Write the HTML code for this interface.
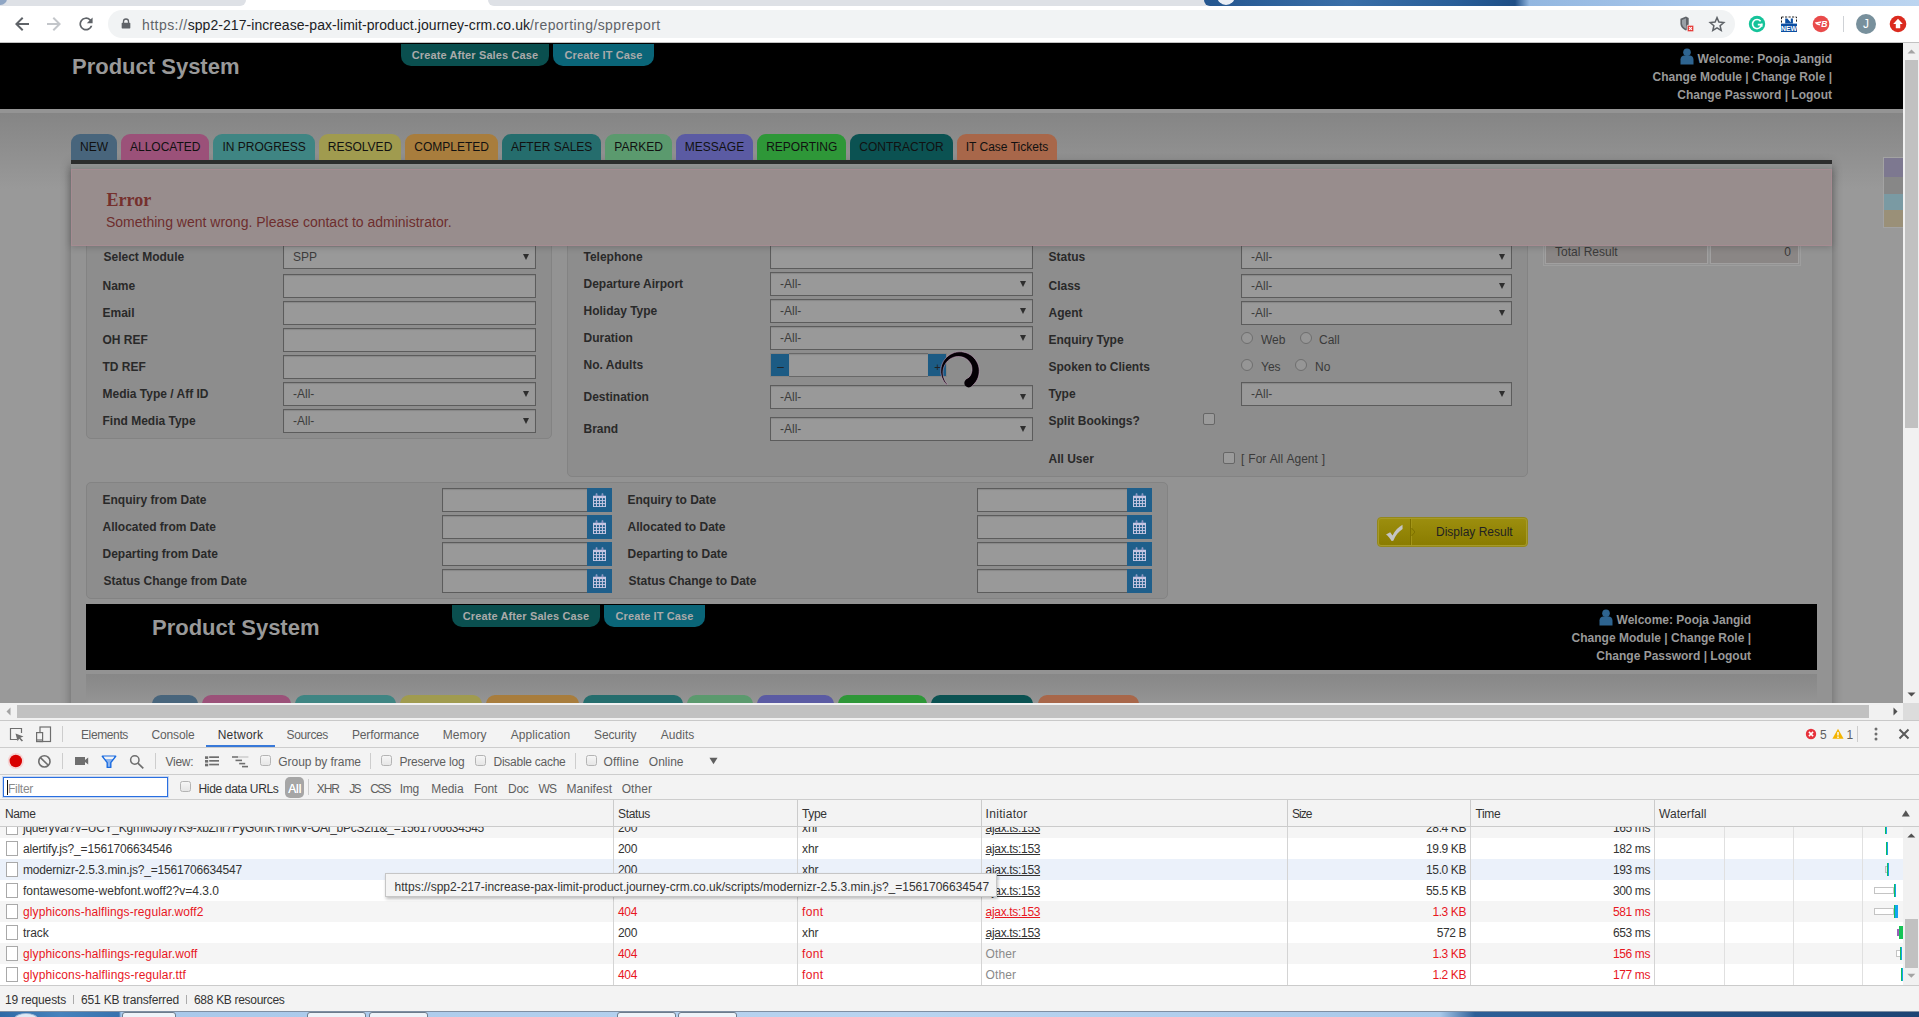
<!DOCTYPE html>
<html lang="en">
<head>
<meta charset="utf-8">
<title>Product System</title>
<style>
*{box-sizing:border-box}
html,body{margin:0;padding:0}
body{width:1919px;height:1017px;overflow:hidden;position:relative;background:#fff;font-family:"Liberation Sans",sans-serif;font-size:12px;color:#222}
.abs{position:absolute}
/* ---------- browser chrome ---------- */
#tabstrip{left:0;top:0;width:1919px;height:6px;background:#fff}
#tabstrip .l{left:0;top:0;width:246px;height:6px;background:#dee1e6;border-bottom-right-radius:7px}
#tabstrip .f{left:-6px;top:-8px;width:13px;height:13px;border-radius:50%;background:#8fa6c4}
#tabstrip .r{left:488px;top:0;width:800px;height:6px;background:#dee1e6;border-bottom-left-radius:7px}
#tabstrip .w{left:1204px;top:0;width:715px;height:6px;overflow:hidden;border-bottom-left-radius:6px;background:linear-gradient(90deg,#24568f 0,#3a6fa8 20%,#2a5f99 35%,#1f4f86 43.500%,#93b7e0 45.500%,#a9c8ec 70%,#bcd5f0 100%)}
#tabstrip .w i{position:absolute;left:13px;top:-13px;width:18px;height:18px;border-radius:50%;background:#e9eef5}
#toolbar{left:0;top:6px;width:1919px;height:37px;background:#fff;border-bottom:1px solid #c2c2c2}
#omni{left:108px;top:10px;width:1627px;height:28px;border-radius:14px;background:#f1f3f4}
#url{left:142px;top:15.500px;font-size:14px;line-height:18px;white-space:nowrap;color:#202124;letter-spacing:0.120px}
#url .p{letter-spacing:0.420px}
#url .g{color:#5f6368}
#url .h{letter-spacing:0.450px}
#url .d{letter-spacing:0.060px}
/* ---------- page ---------- */
#page{left:0;top:43px;width:1903px;height:660px;overflow:hidden;background:linear-gradient(#949494 66px,#949494 70px,#858585 70px,#999 146px)}
#hdr{left:0;top:0;width:1903px;height:66px;background:#000}
.ptitle{font-weight:bold;font-size:22px;color:#999;white-space:nowrap}
.hbtn{height:22px;margin-top:1px;border-radius:0 0 10px 10px;color:#aaa;font-weight:bold;font-size:11px;letter-spacing:0.120px;line-height:22px;text-align:center;white-space:nowrap}
.welcome{color:#999;font-weight:bold;font-size:12px;line-height:18px;text-align:right;white-space:nowrap}
.tabs{white-space:nowrap;font-size:0}
.tab{display:inline-block;height:26px;line-height:26px;padding:0 9px;margin-right:4px;border-radius:9px 9px 0 0;font-size:12px;color:#111;vertical-align:top}

.lbl{position:absolute;margin-left:0.500px;font-weight:bold;font-size:12px;color:#292929;white-space:nowrap;line-height:14px}
.inp{position:absolute;height:24px;border:1px solid #5c5c5c;background:#999;box-shadow:inset 0 1px 1px rgba(0,0,0,.12)}
.sel{position:absolute;height:24px;border:1px solid #5c5c5c;background:#999;font-size:12px;color:#3c3c3c;line-height:22px;padding-left:9px;white-space:nowrap;box-shadow:inset 0 1px 1px rgba(0,0,0,.12)}
.sel:after{content:"";position:absolute;right:6px;top:8px;border-left:3px solid transparent;border-right:3px solid transparent;border-top:6px solid #2e2e2e}
.panel{position:absolute;background:#8d8d8d;border:1px solid #838383;border-radius:5px}
.cal{position:absolute;width:25px;height:24px;background:#1f5f8b}
.rad{position:absolute;width:12px;height:12px;border-radius:50%;border:1px solid #6e6e6e;background:#969696}
.chk{position:absolute;width:12px;height:12px;border-radius:2px;border:1px solid #666;background:#9b9b9b}
.txt{position:absolute;font-size:12px;color:#3a3a3a;white-space:nowrap;line-height:14px}

.dcb{position:absolute;width:11px;height:11px;border:1px solid #b4b4b4;border-radius:2.5px;background:linear-gradient(#f6f6f6,#e6e6e6)}
.dt{position:absolute;white-space:nowrap;font-size:12px;line-height:16px;height:16px}

</style>
</head>
<body>
<!-- browser chrome -->
<div id="tabstrip" class="abs"><div class="abs l"></div><div class="abs f"></div><div class="abs r"></div><div class="abs w"><i></i></div></div>
<div id="toolbar" class="abs"></div>
<div id="omni" class="abs"></div>
<svg class="abs" style="left:12px;top:14px" width="20" height="20" viewBox="0 0 20 20"><path d="M17 9H6.800L11.400 4.400L10 3L3 10L10 17L11.400 15.600L6.800 11H17Z" fill="#5f6368"/></svg>
<svg class="abs" style="left:44px;top:14px" width="20" height="20" viewBox="0 0 20 20"><path d="M3 9H13.200L8.600 4.400L10 3L17 10L10 17L8.600 15.600L13.200 11H3Z" fill="#c3c6ca"/></svg>
<svg class="abs" style="left:76px;top:14px" width="20" height="20" viewBox="0 0 20 20"><path d="M14.7 5.3A6.6 6.6 0 1 0 16.4 11.7H14.6A4.9 4.9 0 1 1 13.5 6.5L10.8 9.2H16.6V3.4Z" fill="#5f6368"/></svg>
<svg class="abs" style="left:121px;top:17.500px" width="10" height="12" viewBox="0 0 12 14"><path d="M2.2 5.4V4a3.8 3.8 0 0 1 7.6 0v1.4h.6a.8.8 0 0 1 .8.8v5.4a.8.8 0 0 1-.8.8H1.6a.8.8 0 0 1-.8-.8V6.200a.8.8 0 0 1 .8-.8zM3.800 5.400h4.400V4a2.200 2.200 0 0 0-4.400 0z" fill="#5f6368"/></svg>
<div id="url" class="abs"><span class="g h">https://</span><span class="d">spp2-217-increase-pax-limit-product.journey-crm.co.uk</span><span class="g p">/reporting/sppreport</span></div>
<!-- right icons -->
<svg class="abs" style="left:1678px;top:15px" width="18" height="18" viewBox="0 0 18 18"><path d="M8 1.600L2.400 3.800V8.200C2.400 11.600 4.800 14.300 8 15.400C9 15.050 9.900 14.500 10.700 13.800V3.000Z" fill="#5f6368"/><path d="M8 3.200V13.700C5.700 12.700 4 10.600 4 8.200V4.900Z" fill="#9aa0a6"/><rect x="9.200" y="10.200" width="6.600" height="6.600" rx="0.800" fill="#e53935" stroke="#f1f3f4" stroke-width="0.800"/><path d="M11.100 12.100L13.900 14.900M13.900 12.100L11.100 14.900" stroke="#fff" stroke-width="1.100"/></svg>
<svg class="abs" style="left:1708px;top:15px" width="18" height="18" viewBox="0 0 18 18"><path d="M9 2.600L10.900 7.100L15.800 7.500L12.100 10.700L13.200 15.500L9 12.950L4.800 15.500L5.900 10.700L2.200 7.500L7.100 7.100Z" fill="none" stroke="#5f6368" stroke-width="1.500" stroke-linejoin="miter"/></svg>
<svg class="abs" style="left:1748px;top:15px" width="18" height="18" viewBox="0 0 18 18"><circle cx="9" cy="9" r="8.200" fill="#15c39a"/><path d="M12.600 6.300A4.500 4.500 0 1 0 13.500 9.600H9.800" fill="none" stroke="#fff" stroke-width="1.600"/><path d="M13.900 8.600V11.700" stroke="#fff" stroke-width="1.300"/></svg>
<svg class="abs" style="left:1780px;top:15px" width="18" height="18" viewBox="0 0 18 18"><rect x="1" y="1.500" width="16" height="15.500" fill="#fff"/><rect x="1" y="8.600" width="16" height="8.400" fill="#0b4ea2"/><path d="M5.200 8.600V3.400H7.300L10.800 7.400V3.400H12.900V8.600Z" fill="#0b4ea2"/><path d="M1.500 2H16.500V7.600" fill="none" stroke="#222" stroke-width="1" stroke-dasharray="2.200 1.300"/><path d="M1.500 2V7.600" fill="none" stroke="#222" stroke-width="1" stroke-dasharray="2.200 1.300"/><text x="9" y="15.600" text-anchor="middle" font-family="Liberation Sans, sans-serif" font-weight="bold" font-size="6.800" fill="#fff">NEW</text></svg>
<svg class="abs" style="left:1812px;top:15px" width="18" height="18" viewBox="0 0 18 18"><circle cx="9" cy="9" r="8.300" fill="#e94b4b"/><path d="M2.600 7.600L9.600 6.300L8.600 8L5.200 8.400L8.300 9L7.600 10.600L4.700 9.400Z" fill="#fff"/><text x="12.400" y="12.100" text-anchor="middle" font-family="Liberation Sans, sans-serif" font-weight="bold" font-style="italic" font-size="8.500" fill="#fff">B</text></svg>
<div class="abs" style="left:1843px;top:16px;width:1px;height:16px;background:#cfd2d6"></div>
<svg class="abs" style="left:1855px;top:13px" width="22" height="22" viewBox="0 0 22 22"><circle cx="11" cy="11" r="10" fill="#78909c"/><text x="11" y="15.300" text-anchor="middle" font-family="Liberation Sans, sans-serif" font-size="12" fill="#fff">J</text></svg>
<svg class="abs" style="left:1889px;top:15px" width="18" height="18" viewBox="0 0 18 18"><circle cx="9" cy="9" r="8.300" fill="#db2b1f"/><path d="M9 3.800L13.800 8.900H11.200V13.200H6.800V8.900H4.200Z" fill="#fff"/></svg>

<!-- page -->
<div id="page" class="abs">
  <div class="abs" style="left:71px;top:121px;width:1761px;height:600px;background:#939393;box-shadow:0 0 10px rgba(0,0,0,.32)"></div>
  <div class="panel" style="left:86px;top:187px;width:466px;height:209px"></div>
  <div class="panel" style="left:567px;top:187px;width:961px;height:247px"></div>
  <div class="panel" style="left:86px;top:439px;width:1082px;height:117px"></div>
  <div class="lbl" style="left:103px;top:207px">Select Module</div>
  <div class="sel" style="left:283px;top:202px;width:253px">SPP</div>
  <div class="lbl" style="left:102px;top:236px">Name</div>
  <div class="inp" style="left:283px;top:231px;width:253px"></div>
  <div class="lbl" style="left:102px;top:263px">Email</div>
  <div class="inp" style="left:283px;top:258px;width:253px"></div>
  <div class="lbl" style="left:102px;top:290px">OH REF</div>
  <div class="inp" style="left:283px;top:285px;width:253px"></div>
  <div class="lbl" style="left:102px;top:317px">TD REF</div>
  <div class="inp" style="left:283px;top:312px;width:253px"></div>
  <div class="lbl" style="left:102px;top:344px">Media Type / Aff ID</div>
  <div class="sel" style="left:283px;top:339px;width:253px">-All-</div>
  <div class="lbl" style="left:102px;top:371px">Find Media Type</div>
  <div class="sel" style="left:283px;top:366px;width:253px">-All-</div>
  <div class="lbl" style="left:583px;top:207px">Telephone</div>
  <div class="inp" style="left:770px;top:202px;width:263px"></div>
  <div class="lbl" style="left:583px;top:234px">Departure Airport</div>
  <div class="sel" style="left:770px;top:229px;width:263px">-All-</div>
  <div class="lbl" style="left:583px;top:261px">Holiday Type</div>
  <div class="sel" style="left:770px;top:256px;width:263px">-All-</div>
  <div class="lbl" style="left:583px;top:288px">Duration</div>
  <div class="sel" style="left:770px;top:283px;width:263px">-All-</div>
  <div class="lbl" style="left:583px;top:315px">No. Adults</div>
  <div class="abs" style="left:770px;top:310px;width:177px;height:24px;border:1px solid #838383;background:#999"></div>
  <div class="abs" style="left:789px;top:310px;width:139px;height:24px;border-top:1px solid #686868;border-bottom:1px solid #686868;box-shadow:inset 0 1px 1px rgba(0,0,0,.1)"></div>
  <div class="abs" style="left:771px;top:311px;width:18px;height:22px;background:#1c5b84;color:#222;font-size:12px;line-height:26px;padding-left:1px;text-align:center">&#8211;</div>
  <div class="abs" style="left:928px;top:311px;width:18px;height:22px;background:#1c5b84;color:#222;font-size:11px;line-height:26px;padding-left:1px;text-align:center">+</div>
  <div class="lbl" style="left:583px;top:347px">Destination</div>
  <div class="sel" style="left:770px;top:342px;width:263px">-All-</div>
  <div class="lbl" style="left:583px;top:379px">Brand</div>
  <div class="sel" style="left:770px;top:374px;width:263px">-All-</div>
  <div class="lbl" style="left:1048px;top:207px">Status</div>
  <div class="sel" style="left:1241px;top:202px;width:271px">-All-</div>
  <div class="lbl" style="left:1048px;top:236px">Class</div>
  <div class="sel" style="left:1241px;top:231px;width:271px">-All-</div>
  <div class="lbl" style="left:1048px;top:263px">Agent</div>
  <div class="sel" style="left:1241px;top:258px;width:271px">-All-</div>
  <div class="lbl" style="left:1048px;top:290px">Enquiry Type</div>
  <div class="rad" style="left:1241px;top:289px"></div><div class="txt" style="left:1261px;top:290px">Web</div>
  <div class="rad" style="left:1300px;top:289px"></div><div class="txt" style="left:1319px;top:290px">Call</div>
  <div class="lbl" style="left:1048px;top:317px">Spoken to Clients</div>
  <div class="rad" style="left:1241px;top:316px"></div><div class="txt" style="left:1261px;top:317px">Yes</div>
  <div class="rad" style="left:1295px;top:316px"></div><div class="txt" style="left:1315px;top:317px">No</div>
  <div class="lbl" style="left:1048px;top:344px">Type</div>
  <div class="sel" style="left:1241px;top:339px;width:271px">-All-</div>
  <div class="lbl" style="left:1048px;top:371px">Split Bookings?</div>
  <div class="chk" style="left:1203px;top:370px"></div>
  <div class="lbl" style="left:1048px;top:409px">All User</div>
  <div class="chk" style="left:1223px;top:409px"></div><div class="txt" style="left:1241px;top:409px;word-spacing:0.700px">[ For All Agent ]</div>
  <div class="abs" style="left:1543px;top:187px;width:258px;height:36px;border:1px solid #9e9e9e"></div>
  <div class="abs" style="left:1545px;top:189px;width:163px;height:32px;background:#8a8685;border:1px solid #a1a0a0"></div>
  <div class="abs" style="left:1710px;top:189px;width:89px;height:32px;background:#8a8685;border:1px solid #a1a0a0"></div>
  <div class="txt" style="left:1555px;top:202px">Total Result</div>
  <div class="txt" style="left:1770px;width:21px;text-align:right;top:202px">0</div>
  <div class="lbl" style="left:102px;top:450px">Enquiry from Date</div>
  <div class="lbl" style="left:627px;top:450px">Enquiry to Date</div>
  <div class="inp" style="left:442px;top:445px;width:146px"></div><div class="cal" style="left:587px;top:445px"><svg width="13" height="14" viewBox="0 0 14 15" preserveAspectRatio="none" style="position:absolute;left:6px;top:5px"><path fill="#c6c6e2" d="M0 3h14v12h-14zM3 0.5h1.6v3.5h-1.6zM9.4 0.5h1.6v3.5h-1.6z"/><g fill="#1f5f8b"><rect x="3.3" y="1.2" width="1" height="2.2" fill="#8888c0"/><rect x="9.7" y="1.2" width="1" height="2.2" fill="#8888c0"/><rect x="1.1" y="5.5" width="2.1" height="2.1"/><rect x="4.3" y="5.5" width="2.1" height="2.1"/><rect x="7.5" y="5.5" width="2.1" height="2.1"/><rect x="10.7" y="5.5" width="2.1" height="2.1"/><rect x="1.1" y="8.7" width="2.1" height="2.1"/><rect x="4.3" y="8.7" width="2.1" height="2.1"/><rect x="7.5" y="8.7" width="2.1" height="2.1"/><rect x="10.7" y="8.7" width="2.1" height="2.1"/><rect x="1.1" y="11.9" width="2.1" height="2.1"/><rect x="4.3" y="11.9" width="2.1" height="2.1"/><rect x="7.5" y="11.9" width="2.1" height="2.1"/><rect x="10.7" y="11.9" width="2.1" height="2.1"/></g></svg></div>
  <div class="inp" style="left:977px;top:445px;width:151px"></div><div class="cal" style="left:1127px;top:445px"><svg width="13" height="14" viewBox="0 0 14 15" preserveAspectRatio="none" style="position:absolute;left:6px;top:5px"><path fill="#c6c6e2" d="M0 3h14v12h-14zM3 0.5h1.6v3.5h-1.6zM9.4 0.5h1.6v3.5h-1.6z"/><g fill="#1f5f8b"><rect x="3.3" y="1.2" width="1" height="2.2" fill="#8888c0"/><rect x="9.7" y="1.2" width="1" height="2.2" fill="#8888c0"/><rect x="1.1" y="5.5" width="2.1" height="2.1"/><rect x="4.3" y="5.5" width="2.1" height="2.1"/><rect x="7.5" y="5.5" width="2.1" height="2.1"/><rect x="10.7" y="5.5" width="2.1" height="2.1"/><rect x="1.1" y="8.7" width="2.1" height="2.1"/><rect x="4.3" y="8.7" width="2.1" height="2.1"/><rect x="7.5" y="8.7" width="2.1" height="2.1"/><rect x="10.7" y="8.7" width="2.1" height="2.1"/><rect x="1.1" y="11.9" width="2.1" height="2.1"/><rect x="4.3" y="11.9" width="2.1" height="2.1"/><rect x="7.5" y="11.9" width="2.1" height="2.1"/><rect x="10.7" y="11.9" width="2.1" height="2.1"/></g></svg></div>
  <div class="lbl" style="left:102px;top:477px">Allocated from Date</div>
  <div class="lbl" style="left:627px;top:477px">Allocated to Date</div>
  <div class="inp" style="left:442px;top:472px;width:146px"></div><div class="cal" style="left:587px;top:472px"><svg width="13" height="14" viewBox="0 0 14 15" preserveAspectRatio="none" style="position:absolute;left:6px;top:5px"><path fill="#c6c6e2" d="M0 3h14v12h-14zM3 0.5h1.6v3.5h-1.6zM9.4 0.5h1.6v3.5h-1.6z"/><g fill="#1f5f8b"><rect x="3.3" y="1.2" width="1" height="2.2" fill="#8888c0"/><rect x="9.7" y="1.2" width="1" height="2.2" fill="#8888c0"/><rect x="1.1" y="5.5" width="2.1" height="2.1"/><rect x="4.3" y="5.5" width="2.1" height="2.1"/><rect x="7.5" y="5.5" width="2.1" height="2.1"/><rect x="10.7" y="5.5" width="2.1" height="2.1"/><rect x="1.1" y="8.7" width="2.1" height="2.1"/><rect x="4.3" y="8.7" width="2.1" height="2.1"/><rect x="7.5" y="8.7" width="2.1" height="2.1"/><rect x="10.7" y="8.7" width="2.1" height="2.1"/><rect x="1.1" y="11.9" width="2.1" height="2.1"/><rect x="4.3" y="11.9" width="2.1" height="2.1"/><rect x="7.5" y="11.9" width="2.1" height="2.1"/><rect x="10.7" y="11.9" width="2.1" height="2.1"/></g></svg></div>
  <div class="inp" style="left:977px;top:472px;width:151px"></div><div class="cal" style="left:1127px;top:472px"><svg width="13" height="14" viewBox="0 0 14 15" preserveAspectRatio="none" style="position:absolute;left:6px;top:5px"><path fill="#c6c6e2" d="M0 3h14v12h-14zM3 0.5h1.6v3.5h-1.6zM9.4 0.5h1.6v3.5h-1.6z"/><g fill="#1f5f8b"><rect x="3.3" y="1.2" width="1" height="2.2" fill="#8888c0"/><rect x="9.7" y="1.2" width="1" height="2.2" fill="#8888c0"/><rect x="1.1" y="5.5" width="2.1" height="2.1"/><rect x="4.3" y="5.5" width="2.1" height="2.1"/><rect x="7.5" y="5.5" width="2.1" height="2.1"/><rect x="10.7" y="5.5" width="2.1" height="2.1"/><rect x="1.1" y="8.7" width="2.1" height="2.1"/><rect x="4.3" y="8.7" width="2.1" height="2.1"/><rect x="7.5" y="8.7" width="2.1" height="2.1"/><rect x="10.7" y="8.7" width="2.1" height="2.1"/><rect x="1.1" y="11.9" width="2.1" height="2.1"/><rect x="4.3" y="11.9" width="2.1" height="2.1"/><rect x="7.5" y="11.9" width="2.1" height="2.1"/><rect x="10.7" y="11.9" width="2.1" height="2.1"/></g></svg></div>
  <div class="lbl" style="left:102px;top:504px">Departing from Date</div>
  <div class="lbl" style="left:627px;top:504px">Departing to Date</div>
  <div class="inp" style="left:442px;top:499px;width:146px"></div><div class="cal" style="left:587px;top:499px"><svg width="13" height="14" viewBox="0 0 14 15" preserveAspectRatio="none" style="position:absolute;left:6px;top:5px"><path fill="#c6c6e2" d="M0 3h14v12h-14zM3 0.5h1.6v3.5h-1.6zM9.4 0.5h1.6v3.5h-1.6z"/><g fill="#1f5f8b"><rect x="3.3" y="1.2" width="1" height="2.2" fill="#8888c0"/><rect x="9.7" y="1.2" width="1" height="2.2" fill="#8888c0"/><rect x="1.1" y="5.5" width="2.1" height="2.1"/><rect x="4.3" y="5.5" width="2.1" height="2.1"/><rect x="7.5" y="5.5" width="2.1" height="2.1"/><rect x="10.7" y="5.5" width="2.1" height="2.1"/><rect x="1.1" y="8.7" width="2.1" height="2.1"/><rect x="4.3" y="8.7" width="2.1" height="2.1"/><rect x="7.5" y="8.7" width="2.1" height="2.1"/><rect x="10.7" y="8.7" width="2.1" height="2.1"/><rect x="1.1" y="11.9" width="2.1" height="2.1"/><rect x="4.3" y="11.9" width="2.1" height="2.1"/><rect x="7.5" y="11.9" width="2.1" height="2.1"/><rect x="10.7" y="11.9" width="2.1" height="2.1"/></g></svg></div>
  <div class="inp" style="left:977px;top:499px;width:151px"></div><div class="cal" style="left:1127px;top:499px"><svg width="13" height="14" viewBox="0 0 14 15" preserveAspectRatio="none" style="position:absolute;left:6px;top:5px"><path fill="#c6c6e2" d="M0 3h14v12h-14zM3 0.5h1.6v3.5h-1.6zM9.4 0.5h1.6v3.5h-1.6z"/><g fill="#1f5f8b"><rect x="3.3" y="1.2" width="1" height="2.2" fill="#8888c0"/><rect x="9.7" y="1.2" width="1" height="2.2" fill="#8888c0"/><rect x="1.1" y="5.5" width="2.1" height="2.1"/><rect x="4.3" y="5.5" width="2.1" height="2.1"/><rect x="7.5" y="5.5" width="2.1" height="2.1"/><rect x="10.7" y="5.5" width="2.1" height="2.1"/><rect x="1.1" y="8.7" width="2.1" height="2.1"/><rect x="4.3" y="8.7" width="2.1" height="2.1"/><rect x="7.5" y="8.7" width="2.1" height="2.1"/><rect x="10.7" y="8.7" width="2.1" height="2.1"/><rect x="1.1" y="11.9" width="2.1" height="2.1"/><rect x="4.3" y="11.9" width="2.1" height="2.1"/><rect x="7.5" y="11.9" width="2.1" height="2.1"/><rect x="10.7" y="11.9" width="2.1" height="2.1"/></g></svg></div>
  <div class="lbl" style="left:103px;top:531px">Status Change from Date</div>
  <div class="lbl" style="left:628px;top:531px">Status Change to Date</div>
  <div class="inp" style="left:442px;top:526px;width:146px"></div><div class="cal" style="left:587px;top:526px"><svg width="13" height="14" viewBox="0 0 14 15" preserveAspectRatio="none" style="position:absolute;left:6px;top:5px"><path fill="#c6c6e2" d="M0 3h14v12h-14zM3 0.5h1.6v3.5h-1.6zM9.4 0.5h1.6v3.5h-1.6z"/><g fill="#1f5f8b"><rect x="3.3" y="1.2" width="1" height="2.2" fill="#8888c0"/><rect x="9.7" y="1.2" width="1" height="2.2" fill="#8888c0"/><rect x="1.1" y="5.5" width="2.1" height="2.1"/><rect x="4.3" y="5.5" width="2.1" height="2.1"/><rect x="7.5" y="5.5" width="2.1" height="2.1"/><rect x="10.7" y="5.5" width="2.1" height="2.1"/><rect x="1.1" y="8.7" width="2.1" height="2.1"/><rect x="4.3" y="8.7" width="2.1" height="2.1"/><rect x="7.5" y="8.7" width="2.1" height="2.1"/><rect x="10.7" y="8.7" width="2.1" height="2.1"/><rect x="1.1" y="11.9" width="2.1" height="2.1"/><rect x="4.3" y="11.9" width="2.1" height="2.1"/><rect x="7.5" y="11.9" width="2.1" height="2.1"/><rect x="10.7" y="11.9" width="2.1" height="2.1"/></g></svg></div>
  <div class="inp" style="left:977px;top:526px;width:151px"></div><div class="cal" style="left:1127px;top:526px"><svg width="13" height="14" viewBox="0 0 14 15" preserveAspectRatio="none" style="position:absolute;left:6px;top:5px"><path fill="#c6c6e2" d="M0 3h14v12h-14zM3 0.5h1.6v3.5h-1.6zM9.4 0.5h1.6v3.5h-1.6z"/><g fill="#1f5f8b"><rect x="3.3" y="1.2" width="1" height="2.2" fill="#8888c0"/><rect x="9.7" y="1.2" width="1" height="2.2" fill="#8888c0"/><rect x="1.1" y="5.5" width="2.1" height="2.1"/><rect x="4.3" y="5.5" width="2.1" height="2.1"/><rect x="7.5" y="5.5" width="2.1" height="2.1"/><rect x="10.7" y="5.5" width="2.1" height="2.1"/><rect x="1.1" y="8.7" width="2.1" height="2.1"/><rect x="4.3" y="8.7" width="2.1" height="2.1"/><rect x="7.5" y="8.7" width="2.1" height="2.1"/><rect x="10.7" y="8.7" width="2.1" height="2.1"/><rect x="1.1" y="11.9" width="2.1" height="2.1"/><rect x="4.3" y="11.9" width="2.1" height="2.1"/><rect x="7.5" y="11.9" width="2.1" height="2.1"/><rect x="10.7" y="11.9" width="2.1" height="2.1"/></g></svg></div>
  <div class="abs" style="left:1377px;top:474px;width:151px;height:30px;border-radius:4px;background:#a69a28;border:1px solid #94881a"></div>
  <div class="abs" style="left:1379px;top:476px;width:147px;height:26px;border-radius:2px;background:linear-gradient(#9c8e0e,#8a7c00)"></div>
  <div class="abs" style="left:1410px;top:476px;width:1px;height:26px;background:#7d7000"></div>
  <div class="abs" style="left:1411px;top:476px;width:1px;height:26px;background:#a39518"></div>
  <svg class="abs" style="left:1411px;top:485px" width="4" height="8"><path d="M0 0L3.500 4L0 8Z" fill="#958808"/><path d="M0.500 0L4 4L0.500 8" fill="none" stroke="#7d7000" stroke-width="1"/></svg>
  <svg class="abs" style="left:1385px;top:481px" width="19" height="18" viewBox="0 0 19 18"><path d="M1 10.5 L5.2 8.2 L7.5 11.5 C10 6.5 13.5 3 17.5 0.8 L17.6 5 C13.5 7.5 10.5 11.5 8.3 16.8 L6.6 17 C5.2 14.4 3.3 12.2 1 10.5Z" fill="#c4c4c4"/></svg>
  <div class="abs" style="left:1436px;top:482px;font-size:12px;color:#222;line-height:14px;white-space:nowrap">Display Result</div>
  <svg class="abs" style="left:938px;top:306px" width="44" height="44" viewBox="-22 -22 44 44"><path d="M11.3 15.5L13.1 14.0L14.7 12.3L16.1 10.5L17.3 8.4L18.2 6.3L18.8 4.0L19.1 1.7L19.2 -0.7L19.0 -3.0L18.5 -5.3L17.7 -7.5L16.6 -9.6L15.3 -11.6L13.8 -13.3L12.1 -14.9L10.2 -16.3L8.1 -17.4L5.9 -18.3L3.7 -18.8L1.3 -19.2L-1.0 -19.2L-3.3 -18.9L-5.6 -18.4L-7.8 -17.5L-9.9 -16.5L-11.8 -15.1L-13.6 -13.6L-15.1 -11.8L-16.5 -9.9L-17.5 -7.8L-18.4 -5.6L-18.9 -3.3L-19.2 -1.0L-19.2 1.3L-18.8 3.7L-18.3 5.9L-17.4 8.1L-16.3 10.2L-14.9 12.1L-13.3 13.8L-12.7 13.2L-14.1 11.4L-15.2 9.5L-16.0 7.5L-16.7 5.4L-17.0 3.3L-17.1 1.2L-16.9 -0.9L-16.5 -2.9L-15.8 -4.8L-14.9 -6.6L-13.8 -8.3L-12.6 -9.8L-11.1 -11.1L-9.6 -12.2L-7.9 -13.1L-6.2 -13.8L-4.4 -14.3L-2.6 -14.5L-0.8 -14.5L1.0 -14.3L2.7 -13.9L4.3 -13.3L5.8 -12.5L7.2 -11.5L8.4 -10.4L9.5 -9.1L10.4 -7.8L11.1 -6.4L11.6 -4.9L11.9 -3.4L12.0 -1.9L12.0 -0.4L11.7 1.0L11.3 2.4L10.8 3.7L10.1 4.9L9.2 6.0L8.3 6.9L7.2 7.8L6.1 8.4Z" fill="#050005" stroke="#d9a8cf" stroke-width="0.5"/><circle cx="8.7" cy="12.0" r="4.4" fill="#050005"/></svg>
  <div class="abs" style="left:71px;top:126px;width:1761px;height:77px;background:#988d8d;border:1px solid #a58b91;box-shadow:0 1px 7px rgba(0,0,0,.2)"></div>
  <div class="abs" style="left:106.500px;top:147px;font-family:'Liberation Serif',serif;font-weight:bold;font-size:18px;line-height:20px;color:#75302d">Error</div>
  <div class="abs" style="left:106px;top:171px;font-size:14px;line-height:16px;color:#6e2e2d;white-space:nowrap">Something went wrong. Please contact to administrator.</div>
  <div class="abs" style="left:86px;top:561px;width:1731px;height:66px;background:#000"></div>
  <div class="abs ptitle" style="left:152px;top:572px">Product System</div>
  <div class="abs hbtn" style="left:452px;top:561px;width:148px;background:#0a4f4f">Create After Sales Case</div>
  <div class="abs hbtn" style="left:604px;top:561px;width:101px;background:#0a6578">Create IT Case</div>
  <svg class="abs" style="left:1599px;top:566px" width="14" height="17" viewBox="0 0 14 17"><circle cx="7" cy="4.300" r="3.800" fill="#2e6490"/><path d="M0.500 16.500V11.500C0.500 9 2.500 7.600 4.200 7.600H9.800C11.500 7.600 13.500 9 13.500 11.500V16.500Z" fill="#2e6490"/></svg>
  <div class="abs welcome" style="left:1500px;width:251px;top:568px">Welcome: Pooja Jangid<br>Change Module | Change Role |<br>Change Password | Logout</div>
  <div class="abs" style="left:86px;top:627px;width:1731px;height:40px;background:linear-gradient(#939393 0,#939393 4px,#878787 4px,#959595 34px)"></div>
  <div class="abs" style="left:152px;top:652px;width:46px;height:26px;border-radius:9px 9px 0 0;background:#48657c"></div>
  <div class="abs" style="left:202px;top:652px;width:89px;height:26px;border-radius:9px 9px 0 0;background:#9b5179"></div>
  <div class="abs" style="left:295px;top:652px;width:101px;height:26px;border-radius:9px 9px 0 0;background:#3f8583"></div>
  <div class="abs" style="left:400px;top:652px;width:82px;height:26px;border-radius:9px 9px 0 0;background:#a09b4f"></div>
  <div class="abs" style="left:486px;top:652px;width:93px;height:26px;border-radius:9px 9px 0 0;background:#a87d3d"></div>
  <div class="abs" style="left:583px;top:652px;width:100px;height:26px;border-radius:9px 9px 0 0;background:#256d6d"></div>
  <div class="abs" style="left:687px;top:652px;width:66px;height:26px;border-radius:9px 9px 0 0;background:#5b9a6e"></div>
  <div class="abs" style="left:757px;top:652px;width:77px;height:26px;border-radius:9px 9px 0 0;background:#5b5ba3"></div>
  <div class="abs" style="left:838px;top:652px;width:89px;height:26px;border-radius:9px 9px 0 0;background:#2e9738"></div>
  <div class="abs" style="left:931px;top:652px;width:102px;height:26px;border-radius:9px 9px 0 0;background:#0b5252"></div>
  <div class="abs" style="left:1038px;top:652px;width:101px;height:26px;border-radius:9px 9px 0 0;background:#a8674a"></div>
  <div class="abs" style="left:1883px;top:115px;width:20px;height:19px;background:#7d7890;border-left:1px solid #a3a3a3"></div>
  <div class="abs" style="left:1883px;top:134px;width:20px;height:17px;background:#878787;border-left:1px solid #a3a3a3"></div>
  <div class="abs" style="left:1883px;top:151px;width:20px;height:16px;background:#7a9aa3;border-left:1px solid #a3a3a3"></div>
  <div class="abs" style="left:1883px;top:167px;width:20px;height:17px;background:#9a9078;border-left:1px solid #a3a3a3"></div>
  <div class="abs" style="left:1883px;top:114px;width:20px;height:1px;background:#a3a3a3"></div>
  <div class="abs" style="left:1883px;top:184px;width:20px;height:1px;background:#a3a3a3"></div>
  <div id="hdr" class="abs"></div>
  <div class="abs ptitle" style="left:72px;top:11px">Product System</div>
  <div class="abs hbtn" style="left:401px;top:0;width:148px;background:#0a4f4f">Create After Sales Case</div>
  <div class="abs hbtn" style="left:553px;top:0;width:101px;background:#0a6578">Create IT Case</div>
  <svg class="abs" style="left:1680px;top:5px" width="14" height="17" viewBox="0 0 14 17"><circle cx="7" cy="4.300" r="3.800" fill="#2e6490"/><path d="M0.500 16.500V11.500C0.500 9 2.500 7.600 4.200 7.600H9.800C11.500 7.600 13.500 9 13.500 11.500V16.500Z" fill="#2e6490"/></svg>
  <div class="abs welcome" style="right:71px;top:7px">Welcome: Pooja Jangid<br>Change Module | Change Role |<br>Change Password | Logout</div>
  <div class="abs tabs" style="left:71px;top:91px">
    <span class="tab" style="background:#48657c">NEW</span><span class="tab" style="background:#9b5179">ALLOCATED</span><span class="tab" style="background:#3f8583">IN PROGRESS</span><span class="tab" style="background:#a09b4f">RESOLVED</span><span class="tab" style="background:#a87d3d">COMPLETED</span><span class="tab" style="background:#256d6d">AFTER SALES</span><span class="tab" style="background:#5b9a6e">PARKED</span><span class="tab" style="background:#5b5ba3">MESSAGE</span><span class="tab" style="background:#2e9738">REPORTING</span><span class="tab" style="background:#0b5252">CONTRACTOR</span><span class="tab" style="background:#a8674a">IT Case Tickets</span>
  </div>
  <div class="abs" style="left:71px;top:117px;width:1761px;height:4px;background:#2d2d2d"></div>

</div>
<div class="abs" style="left:1903px;top:43px;width:16px;height:660px;background:#f1f1f1"></div>
<div class="abs" style="left:1905px;top:60px;width:13px;height:368px;background:#c1c1c1"></div>
<svg class="abs" style="left:1903px;top:43px" width="17" height="17"><path d="M4.5 10.5L8.5 6.5L12.5 10.5Z" fill="#a3a3a3"/></svg>
<svg class="abs" style="left:1903px;top:686px" width="17" height="17"><path d="M4.5 6.5L8.5 10.5L12.5 6.5Z" fill="#505050"/></svg>
<div class="abs" style="left:0;top:703px;width:1919px;height:17px;background:#f1f1f1"></div>
<div class="abs" style="left:17px;top:705px;width:1852px;height:13px;background:#c1c1c1"></div>
<svg class="abs" style="left:0;top:703px" width="17" height="17"><path d="M10.5 4.5L6.5 8.5L10.5 12.5Z" fill="#a3a3a3"/></svg>
<svg class="abs" style="left:1887px;top:703px" width="17" height="17"><path d="M6.5 4.5L10.5 8.5L6.5 12.5Z" fill="#505050"/></svg>
<div class="abs" style="left:1903px;top:703px;width:16px;height:17px;background:#dcdcdc"></div>
<div id="dt" class="abs" style="left:0;top:720px;width:1919px;height:292px;background:#f3f3f3"></div>
<div class="abs" style="left:0px;top:720px;width:1919px;height:1px;background:#c9c9c9"></div>
<div class="abs" style="left:0px;top:747px;width:1919px;height:1px;background:#cdcdcd"></div>
<div class="abs" style="left:0px;top:774px;width:1919px;height:1px;background:#cdcdcd"></div>
<div class="abs" style="left:0px;top:799px;width:1919px;height:1px;background:#cdcdcd"></div>
<svg class="abs" style="left:8px;top:725px" width="18" height="18" viewBox="0 0 18 18"><path d="M9 14.5H2.5V3.5H13.5V8" fill="none" stroke="#6e6e6e" stroke-width="1.2"/><path d="M7.5 8.5L15.5 11.6L12.3 12.7L15 15.6L13.8 16.6L11.2 13.7L9.6 16.3Z" fill="#6e6e6e"/></svg>
<svg class="abs" style="left:34px;top:724px" width="20" height="20" viewBox="0 0 20 20"><rect x="6" y="3" width="10.5" height="14.5" fill="none" stroke="#6e6e6e" stroke-width="1.2"/><rect x="2.6" y="8.6" width="6" height="9" fill="#f3f3f3" stroke="#6e6e6e" stroke-width="1.2"/><rect x="2.6" y="15.4" width="6" height="1.2" fill="#6e6e6e"/></svg>
<div class="abs" style="left:62px;top:726px;width:1px;height:16px;background:#cdcdcd"></div>
<span class="dt" style="top:726.8px;font-size:12px;color:#5f5f5f;left:81.0px;letter-spacing:-0.379px;">Elements</span>
<span class="dt" style="top:726.8px;font-size:12px;color:#5f5f5f;left:151.5px;letter-spacing:-0.147px;">Console</span>
<span class="dt" style="top:726.8px;font-size:12px;color:#333;left:217.7px;letter-spacing:0.212px;">Network</span>
<span class="dt" style="top:726.8px;font-size:12px;color:#5f5f5f;left:286.5px;letter-spacing:-0.362px;">Sources</span>
<span class="dt" style="top:726.8px;font-size:12px;color:#5f5f5f;left:352.0px;letter-spacing:-0.155px;">Performance</span>
<span class="dt" style="top:726.8px;font-size:12px;color:#5f5f5f;left:442.7px;letter-spacing:0.109px;">Memory</span>
<span class="dt" style="top:726.8px;font-size:12px;color:#5f5f5f;left:510.8px;letter-spacing:0.071px;">Application</span>
<span class="dt" style="top:726.8px;font-size:12px;color:#5f5f5f;left:594.0px;letter-spacing:-0.107px;">Security</span>
<span class="dt" style="top:726.8px;font-size:12px;color:#5f5f5f;left:660.8px;letter-spacing:0.023px;">Audits</span>
<div class="abs" style="left:206px;top:745px;width:69px;height:2px;background:#3879d9"></div>
<svg class="abs" style="left:1805px;top:728px" width="12" height="12" viewBox="0 0 12 12"><circle cx="6" cy="6" r="5.2" fill="#e6323c"/><path d="M3.9 3.9L8.1 8.1M8.1 3.9L3.9 8.1" stroke="#fff" stroke-width="1.5"/></svg>
<span class="dt" style="top:726.8px;font-size:12px;color:#5f5f5f;left:1820.0px;letter-spacing:-0.188px;">5</span>
<svg class="abs" style="left:1832px;top:728px" width="12" height="12" viewBox="0 0 12 12"><path d="M6 0.8L11.6 10.8H0.4Z" fill="#f4b400"/><path d="M6 4v3.6M6 8.6v1.3" stroke="#fff" stroke-width="1.4"/></svg>
<span class="dt" style="top:726.8px;font-size:12px;color:#5f5f5f;left:1846.5px;letter-spacing:-1.688px;">1</span>
<div class="abs" style="left:1857px;top:726px;width:1px;height:16px;background:#cdcdcd"></div>
<svg class="abs" style="left:1870px;top:726px" width="12" height="16" viewBox="0 0 12 16"><circle cx="6" cy="3" r="1.5" fill="#6e6e6e"/><circle cx="6" cy="8" r="1.5" fill="#6e6e6e"/><circle cx="6" cy="13" r="1.5" fill="#6e6e6e"/></svg>
<svg class="abs" style="left:1897px;top:727px" width="14" height="14" viewBox="0 0 14 14"><path d="M2.500 2.500L11.500 11.500M11.500 2.500L2.500 11.500" stroke="#5a5a5a" stroke-width="2"/></svg>
<svg class="abs" style="left:6px;top:751px" width="20" height="20" viewBox="0 0 20 20"><circle cx="9.8" cy="10" r="8" fill="#f7c8c8" opacity=".7"/><circle cx="9.8" cy="10" r="6.2" fill="#d80000"/></svg>
<svg class="abs" style="left:36px;top:753px" width="17" height="17" viewBox="0 0 17 17"><circle cx="8.4" cy="8.4" r="5.6" fill="none" stroke="#6e6e6e" stroke-width="1.6"/><path d="M4.4 4.6L12.3 12.3" stroke="#6e6e6e" stroke-width="1.6"/></svg>
<div class="abs" style="left:62px;top:753px;width:1px;height:16px;background:#cdcdcd"></div>
<svg class="abs" style="left:74px;top:755px" width="16" height="12" viewBox="0 0 16 12"><path d="M1 2h10v8H1zM11 5l3.2-2.6v7.2L11 7z" fill="#6e6e6e"/></svg>
<svg class="abs" style="left:101px;top:754px" width="16" height="16" viewBox="0 0 16 16"><path d="M1.3 2.2H14.7L9.8 8.6V13.4H6.2V8.6Z" fill="#8ab4f0" stroke="#1a6be0" stroke-width="1.4" stroke-linejoin="round"/><path d="M2.5 2.6H13.5L11.6 5H4.4Z" fill="#f3f3f3"/></svg>
<svg class="abs" style="left:128px;top:753px" width="18" height="18" viewBox="0 0 18 18"><circle cx="6.8" cy="7" r="4.2" fill="none" stroke="#6e6e6e" stroke-width="1.5"/><path d="M9.9 10.2L15.3 15.4" stroke="#6e6e6e" stroke-width="1.7"/></svg>
<div class="abs" style="left:155px;top:753px;width:1px;height:16px;background:#cdcdcd"></div>
<span class="dt" style="top:753.6px;font-size:12px;color:#5f5f5f;left:165.4px;letter-spacing:-0.228px;">View:</span>
<svg class="abs" style="left:204px;top:755px" width="16" height="12" viewBox="0 0 16 12"><g fill="#6e6e6e"><rect x="1" y="1.3" width="3.2" height="2.6"/><rect x="1" y="5" width="3.2" height="2.6"/><rect x="1" y="8.7" width="3.2" height="2.6"/><rect x="5.2" y="1.3" width="9.8" height="1.7"/><rect x="5.2" y="5" width="9.8" height="1.7"/><rect x="5.2" y="8.7" width="9.8" height="1.7"/></g></svg>
<svg class="abs" style="left:231px;top:755px" width="18" height="13" viewBox="0 0 18 13"><rect x="1" y="1.3" width="16.4" height="1.4" fill="#c9c9c9"/><g fill="#6e6e6e"><rect x="1" y="1.3" width="6" height="1.4"/><rect x="4.5" y="4.6" width="6.5" height="1.6"/><rect x="8.2" y="7.8" width="6" height="1.6"/><rect x="11" y="10.8" width="6" height="1.6"/></g></svg>
<div class="dcb" style="left:260.0px;top:755.0px"></div>
<span class="dt" style="top:753.6px;font-size:12px;color:#5f5f5f;left:278.3px;letter-spacing:-0.048px;">Group by frame</span>
<div class="abs" style="left:370px;top:753px;width:1px;height:16px;background:#cdcdcd"></div>
<div class="dcb" style="left:381.0px;top:755.0px"></div>
<span class="dt" style="top:753.6px;font-size:12px;color:#5f5f5f;left:399.4px;letter-spacing:-0.198px;">Preserve log</span>
<div class="dcb" style="left:475.0px;top:755.0px"></div>
<span class="dt" style="top:753.6px;font-size:12px;color:#5f5f5f;left:493.5px;letter-spacing:-0.260px;">Disable cache</span>
<div class="abs" style="left:575px;top:753px;width:1px;height:16px;background:#cdcdcd"></div>
<div class="dcb" style="left:586.0px;top:755.0px"></div>
<span class="dt" style="top:753.6px;font-size:12px;color:#5f5f5f;left:603.5px;letter-spacing:0.147px;">Offline</span>
<span class="dt" style="top:753.6px;font-size:12px;color:#5f5f5f;left:648.8px;letter-spacing:0.002px;">Online</span>
<svg class="abs" style="left:709px;top:757px" width="9" height="8"><path d="M0.5 0.8H8.5L4.5 7.2Z" fill="#5f5f5f"/></svg>
<div class="abs" style="left:3px;top:777px;width:165px;height:20px;background:#fff;border:1px solid #2a6fe0;box-shadow:0 0 0 1px rgba(70,130,230,.25)"></div>
<div class="abs" style="left:7px;top:780px;width:1px;height:15px;background:#111"></div>
<span class="dt" style="top:781.1px;font-size:12px;color:#8a8a8a;left:8.0px;letter-spacing:-0.279px;">Filter</span>
<div class="dcb" style="left:180.0px;top:781.0px"></div>
<span class="dt" style="top:780.6px;font-size:12px;color:#333;left:198.5px;letter-spacing:-0.337px;">Hide data URLs</span>
<div class="abs" style="left:285px;top:777px;width:19px;height:21px;border-radius:5px;background:#a6a6a6"></div>
<span class="dt" style="top:781.1px;font-size:12px;color:#fff;left:288.2px;letter-spacing:-0.115px;text-shadow:0 0 .4px #fff">All</span>
<div class="abs" style="left:308px;top:779px;width:1px;height:16px;background:#cdcdcd"></div>
<span class="dt" style="top:781.2px;font-size:12px;color:#5f5f5f;left:316.8px;letter-spacing:-1.048px;">XHR</span>
<span class="dt" style="top:781.2px;font-size:12px;color:#5f5f5f;left:349.3px;letter-spacing:-1.908px;">JS</span>
<span class="dt" style="top:781.2px;font-size:12px;color:#5f5f5f;left:370.2px;letter-spacing:-1.629px;">CSS</span>
<span class="dt" style="top:781.2px;font-size:12px;color:#5f5f5f;left:399.8px;letter-spacing:-0.339px;">Img</span>
<span class="dt" style="top:781.2px;font-size:12px;color:#5f5f5f;left:431.3px;letter-spacing:-0.097px;">Media</span>
<span class="dt" style="top:781.2px;font-size:12px;color:#5f5f5f;left:474.0px;letter-spacing:-0.254px;">Font</span>
<span class="dt" style="top:781.2px;font-size:12px;color:#5f5f5f;left:508.0px;letter-spacing:-0.281px;">Doc</span>
<span class="dt" style="top:781.2px;font-size:12px;color:#5f5f5f;left:538.5px;letter-spacing:-0.922px;">WS</span>
<span class="dt" style="top:781.2px;font-size:12px;color:#5f5f5f;left:566.5px;letter-spacing:0.018px;">Manifest</span>
<span class="dt" style="top:781.2px;font-size:12px;color:#5f5f5f;left:621.7px;letter-spacing:0.057px;">Other</span>
<span class="dt" style="top:805.8px;font-size:12px;color:#333;left:5.0px;letter-spacing:-0.379px;">Name</span>
<span class="dt" style="top:805.8px;font-size:12px;color:#333;left:618.0px;letter-spacing:-0.339px;">Status</span>
<span class="dt" style="top:805.8px;font-size:12px;color:#333;left:802.0px;letter-spacing:-0.379px;">Type</span>
<span class="dt" style="top:805.8px;font-size:12px;color:#333;left:985.6px;letter-spacing:0.293px;">Initiator</span>
<span class="dt" style="top:805.8px;font-size:12px;color:#333;left:1292.0px;letter-spacing:-0.961px;">Size</span>
<span class="dt" style="top:805.8px;font-size:12px;color:#333;left:1475.4px;letter-spacing:-0.309px;">Time</span>
<span class="dt" style="top:805.8px;font-size:12px;color:#333;left:1659.0px;letter-spacing:0.066px;">Waterfall</span>
<svg class="abs" style="left:1901px;top:809px" width="10" height="9"><path d="M0.8 7.6H8.8L4.8 1.2Z" fill="#555"/></svg>
<div class="abs" style="left:0px;top:826px;width:1919px;height:1px;background:#cbcbcb"></div>
<div class="abs" style="left:0;top:827px;width:1919px;height:158px;overflow:hidden">
<div class="abs" style="left:0;top:-10px;width:1903px;height:21px;background:#f5f5f5"></div>
<div class="abs" style="left:6px;top:-7.0px;width:12px;height:15px;background:#fff;border:1px solid #a9a9a9"></div>
<span class="dt" style="top:-6.7px;font-size:12px;color:#333;left:23.0px;letter-spacing:-0.249px;">jqueryval?v=UCY_KgmMJJly7K9-xbZnr7FyG0nKYMKV-OAl_bPcS2l1&amp;_=1561706634545</span>
<span class="dt" style="top:-6.7px;font-size:12px;color:#333;left:618.0px;letter-spacing:-0.344px;">200</span>
<span class="dt" style="top:-6.7px;font-size:12px;color:#333;left:802.0px;letter-spacing:-0.057px;">xhr</span>
<span class="dt" style="top:-6.7px;font-size:12px;color:#333;left:985.6px;letter-spacing:-0.322px;text-decoration:underline">ajax.ts:153</span>
<span class="dt" style="top:-6.7px;font-size:12px;color:#333;right:453.0px;letter-spacing:-0.400px;">28.4 KB</span>
<span class="dt" style="top:-6.7px;font-size:12px;color:#333;right:269.0px;letter-spacing:-0.400px;">165 ms</span>
<div class="abs" style="left:0;top:11px;width:1903px;height:21px;background:#fff"></div>
<div class="abs" style="left:6px;top:14.0px;width:12px;height:15px;background:#fff;border:1px solid #a9a9a9"></div>
<span class="dt" style="top:14.3px;font-size:12px;color:#333;left:23.0px;letter-spacing:-0.170px;">alertify.js?_=1561706634546</span>
<span class="dt" style="top:14.3px;font-size:12px;color:#333;left:618.0px;letter-spacing:-0.344px;">200</span>
<span class="dt" style="top:14.3px;font-size:12px;color:#333;left:802.0px;letter-spacing:-0.057px;">xhr</span>
<span class="dt" style="top:14.3px;font-size:12px;color:#333;left:985.6px;letter-spacing:-0.322px;text-decoration:underline">ajax.ts:153</span>
<span class="dt" style="top:14.3px;font-size:12px;color:#333;right:453.0px;letter-spacing:-0.400px;">19.9 KB</span>
<span class="dt" style="top:14.3px;font-size:12px;color:#333;right:269.0px;letter-spacing:-0.400px;">182 ms</span>
<div class="abs" style="left:0;top:32px;width:1903px;height:21px;background:#ebf1fa"></div>
<div class="abs" style="left:6px;top:35.0px;width:12px;height:15px;background:#fff;border:1px solid #a9a9a9"></div>
<span class="dt" style="top:35.3px;font-size:12px;color:#333;left:23.0px;letter-spacing:-0.180px;">modernizr-2.5.3.min.js?_=1561706634547</span>
<span class="dt" style="top:35.3px;font-size:12px;color:#333;left:618.0px;letter-spacing:-0.344px;">200</span>
<span class="dt" style="top:35.3px;font-size:12px;color:#333;left:802.0px;letter-spacing:-0.057px;">xhr</span>
<span class="dt" style="top:35.3px;font-size:12px;color:#333;left:985.6px;letter-spacing:-0.322px;text-decoration:underline">ajax.ts:153</span>
<span class="dt" style="top:35.3px;font-size:12px;color:#333;right:453.0px;letter-spacing:-0.400px;">15.0 KB</span>
<span class="dt" style="top:35.3px;font-size:12px;color:#333;right:269.0px;letter-spacing:-0.400px;">193 ms</span>
<div class="abs" style="left:0;top:53px;width:1903px;height:21px;background:#fff"></div>
<div class="abs" style="left:6px;top:56.0px;width:12px;height:15px;background:#fff;border:1px solid #a9a9a9"></div>
<span class="dt" style="top:56.3px;font-size:12px;color:#333;left:23.0px;letter-spacing:0.013px;">fontawesome-webfont.woff2?v=4.3.0</span>
<span class="dt" style="top:56.3px;font-size:12px;color:#333;left:618.0px;letter-spacing:-0.344px;">200</span>
<span class="dt" style="top:56.3px;font-size:12px;color:#333;left:985.6px;letter-spacing:-0.322px;text-decoration:underline">ajax.ts:153</span>
<span class="dt" style="top:56.3px;font-size:12px;color:#333;right:453.0px;letter-spacing:-0.400px;">55.5 KB</span>
<span class="dt" style="top:56.3px;font-size:12px;color:#333;right:269.0px;letter-spacing:-0.400px;">300 ms</span>
<div class="abs" style="left:0;top:74px;width:1903px;height:21px;background:#f5f5f5"></div>
<div class="abs" style="left:6px;top:77.0px;width:12px;height:15px;background:#fff;border:1px solid #a9a9a9"></div>
<span class="dt" style="top:77.3px;font-size:12px;color:#e8171f;left:23.0px;letter-spacing:0.097px;">glyphicons-halflings-regular.woff2</span>
<span class="dt" style="top:77.3px;font-size:12px;color:#e8171f;left:618.0px;letter-spacing:-0.344px;">404</span>
<span class="dt" style="top:77.3px;font-size:12px;color:#e8171f;left:802.0px;letter-spacing:0.371px;">font</span>
<span class="dt" style="top:77.3px;font-size:12px;color:#e8171f;left:985.6px;letter-spacing:-0.322px;text-decoration:underline">ajax.ts:153</span>
<span class="dt" style="top:77.3px;font-size:12px;color:#e8171f;right:453.0px;letter-spacing:-0.400px;">1.3 KB</span>
<span class="dt" style="top:77.3px;font-size:12px;color:#e8171f;right:269.0px;letter-spacing:-0.400px;">581 ms</span>
<div class="abs" style="left:0;top:95px;width:1903px;height:21px;background:#fff"></div>
<div class="abs" style="left:6px;top:98.0px;width:12px;height:15px;background:#fff;border:1px solid #a9a9a9"></div>
<span class="dt" style="top:98.3px;font-size:12px;color:#333;left:23.0px;letter-spacing:-0.063px;">track</span>
<span class="dt" style="top:98.3px;font-size:12px;color:#333;left:618.0px;letter-spacing:-0.344px;">200</span>
<span class="dt" style="top:98.3px;font-size:12px;color:#333;left:802.0px;letter-spacing:-0.057px;">xhr</span>
<span class="dt" style="top:98.3px;font-size:12px;color:#333;left:985.6px;letter-spacing:-0.322px;text-decoration:underline">ajax.ts:153</span>
<span class="dt" style="top:98.3px;font-size:12px;color:#333;right:453.0px;letter-spacing:-0.400px;">572 B</span>
<span class="dt" style="top:98.3px;font-size:12px;color:#333;right:269.0px;letter-spacing:-0.400px;">653 ms</span>
<div class="abs" style="left:0;top:116px;width:1903px;height:21px;background:#f5f5f5"></div>
<div class="abs" style="left:6px;top:119.0px;width:12px;height:15px;background:#fff;border:1px solid #a9a9a9"></div>
<span class="dt" style="top:119.3px;font-size:12px;color:#e8171f;left:23.0px;letter-spacing:0.120px;">glyphicons-halflings-regular.woff</span>
<span class="dt" style="top:119.3px;font-size:12px;color:#e8171f;left:618.0px;letter-spacing:-0.344px;">404</span>
<span class="dt" style="top:119.3px;font-size:12px;color:#e8171f;left:802.0px;letter-spacing:0.371px;">font</span>
<span class="dt" style="top:119.3px;font-size:12px;color:#8a8a8a;left:985.6px;letter-spacing:0.097px;">Other</span>
<span class="dt" style="top:119.3px;font-size:12px;color:#e8171f;right:453.0px;letter-spacing:-0.400px;">1.3 KB</span>
<span class="dt" style="top:119.3px;font-size:12px;color:#e8171f;right:269.0px;letter-spacing:-0.400px;">156 ms</span>
<div class="abs" style="left:0;top:137px;width:1903px;height:21px;background:#fff"></div>
<div class="abs" style="left:6px;top:140.0px;width:12px;height:15px;background:#fff;border:1px solid #a9a9a9"></div>
<span class="dt" style="top:140.3px;font-size:12px;color:#e8171f;left:23.0px;letter-spacing:0.133px;">glyphicons-halflings-regular.ttf</span>
<span class="dt" style="top:140.3px;font-size:12px;color:#e8171f;left:618.0px;letter-spacing:-0.344px;">404</span>
<span class="dt" style="top:140.3px;font-size:12px;color:#e8171f;left:802.0px;letter-spacing:0.371px;">font</span>
<span class="dt" style="top:140.3px;font-size:12px;color:#8a8a8a;left:985.6px;letter-spacing:0.097px;">Other</span>
<span class="dt" style="top:140.3px;font-size:12px;color:#e8171f;right:453.0px;letter-spacing:-0.400px;">1.2 KB</span>
<span class="dt" style="top:140.3px;font-size:12px;color:#e8171f;right:269.0px;letter-spacing:-0.400px;">177 ms</span>
<div class="abs" style="left:613px;top:0;width:1px;height:158px;background:#d4d4d4"></div>
<div class="abs" style="left:797px;top:0;width:1px;height:158px;background:#d4d4d4"></div>
<div class="abs" style="left:981px;top:0;width:1px;height:158px;background:#d4d4d4"></div>
<div class="abs" style="left:1287px;top:0;width:1px;height:158px;background:#d4d4d4"></div>
<div class="abs" style="left:1470px;top:0;width:1px;height:158px;background:#d4d4d4"></div>
<div class="abs" style="left:1654px;top:0;width:1px;height:158px;background:#d4d4d4"></div>
<div class="abs" style="left:1724px;top:0;width:1px;height:158px;background:#e0e0e0"></div>
<div class="abs" style="left:1793px;top:0;width:1px;height:158px;background:#e0e0e0"></div>
<div class="abs" style="left:1862px;top:0;width:1px;height:158px;background:#e0e0e0"></div>
<div class="abs" style="left:1884.5px;top:-6.0px;width:1.2px;height:13px;background:#0cc060"></div>
<div class="abs" style="left:1885.5px;top:-6.0px;width:1.4px;height:13px;background:#18a0ea"></div>
<div class="abs" style="left:1885.5px;top:15.0px;width:1.2px;height:13px;background:#0cc060"></div>
<div class="abs" style="left:1886.5px;top:15.0px;width:1.4px;height:13px;background:#18a0ea"></div>
<div class="abs" style="left:1885.0px;top:39.0px;width:3.0px;height:7px;background:#e8e8e8;border:1px solid #bdbdbd"></div>
<div class="abs" style="left:1887.0px;top:36.0px;width:1.2px;height:13px;background:#0cc060"></div>
<div class="abs" style="left:1888.0px;top:36.0px;width:1.4px;height:13px;background:#18a0ea"></div>
<div class="abs" style="left:1874.0px;top:60.0px;width:20.0px;height:7px;background:#fff;border:1px solid #c4c4c4"></div>
<div class="abs" style="left:1894.0px;top:57.0px;width:1.2px;height:13px;background:#0cc060"></div>
<div class="abs" style="left:1895.0px;top:57.0px;width:1.4px;height:13px;background:#18a0ea"></div>
<div class="abs" style="left:1874.0px;top:81.0px;width:20.0px;height:7px;background:#fff;border:1px solid #c4c4c4"></div>
<div class="abs" style="left:1894.0px;top:78.0px;width:1.2px;height:13px;background:#0cc060"></div>
<div class="abs" style="left:1895.0px;top:78.0px;width:3.2px;height:13px;background:#13a4f0"></div>
<div class="abs" style="left:1896.6px;top:102.0px;width:2.4px;height:7px;background:#9a5fb8"></div>
<div class="abs" style="left:1899.0px;top:99.0px;width:4.0px;height:13px;background:#14c455"></div>
<div class="abs" style="left:1896.0px;top:123.0px;width:5.0px;height:7px;background:#fff;border:1px solid #c4c4c4"></div>
<div class="abs" style="left:1900.0px;top:120.0px;width:1.2px;height:13px;background:#0cc060"></div>
<div class="abs" style="left:1901.0px;top:120.0px;width:1.4px;height:13px;background:#18a0ea"></div>
<div class="abs" style="left:1901.0px;top:141.0px;width:1.2px;height:13px;background:#0cc060"></div>
<div class="abs" style="left:1902.0px;top:141.0px;width:1.4px;height:13px;background:#18a0ea"></div>
</div>
<div class="abs" style="left:613px;top:800px;width:1px;height:26px;background:#cbcbcb"></div>
<div class="abs" style="left:797px;top:800px;width:1px;height:26px;background:#cbcbcb"></div>
<div class="abs" style="left:981px;top:800px;width:1px;height:26px;background:#cbcbcb"></div>
<div class="abs" style="left:1287px;top:800px;width:1px;height:26px;background:#cbcbcb"></div>
<div class="abs" style="left:1470px;top:800px;width:1px;height:26px;background:#cbcbcb"></div>
<div class="abs" style="left:1654px;top:800px;width:1px;height:26px;background:#cbcbcb"></div>
<div class="abs" style="left:1903px;top:827px;width:16px;height:158px;background:#f1f1f1"></div>
<div class="abs" style="left:1905px;top:919px;width:13px;height:49px;background:#c1c1c1"></div>
<svg class="abs" style="left:1903px;top:829px" width="16" height="12"><path d="M4.3 8.5L8.3 4.5L12.3 8.5Z" fill="#505050"/></svg>
<svg class="abs" style="left:1903px;top:970px" width="16" height="12"><path d="M4.3 3.8L8.3 7.8L12.3 3.8Z" fill="#a3a3a3"/></svg>
<div class="abs" style="left:0px;top:985px;width:1919px;height:1px;background:#cbcbcb"></div>
<span class="dt" style="top:992.1px;font-size:12px;color:#333;left:5.0px;letter-spacing:-0.156px;">19 requests</span>
<span class="dt" style="top:992.1px;font-size:12px;color:#333;left:81.0px;letter-spacing:-0.152px;">651 KB transferred</span>
<span class="dt" style="top:992.1px;font-size:12px;color:#333;left:194.0px;letter-spacing:-0.306px;">688 KB resources</span>
<div class="abs" style="left:73px;top:995px;width:1px;height:9px;background:#aaa"></div>
<div class="abs" style="left:186px;top:995px;width:1px;height:9px;background:#aaa"></div>
<div class="abs" style="left:385px;top:873px;width:612px;height:24px;background:#f4f4f4;border:1px solid #c6c6c6;box-shadow:1px 2px 3px rgba(0,0,0,.25)"></div>
<span class="dt" style="top:878.6px;font-size:12px;color:#333;left:394.6px;letter-spacing:0.005px;">https://spp2-217-increase-pax-limit-product.journey-crm.co.uk/scripts/modernizr-2.5.3.min.js?_=1561706634547</span>
<div class="abs" style="left:0;top:1012px;width:1919px;height:5px;background:linear-gradient(90deg,#2f6aa6 0,#4682bd 60px,#3772ae 119px,#a8c8ea 121px,#b9d4f0 900px,#a9c9ea 1440px,#2d5f97 1475px,#1d4474 1919px)"></div>
<div class="abs" style="left:0px;top:1011px;width:1919px;height:1px;background:#7f8fa3"></div>
<div class="abs" style="left:14px;top:1013px;width:24px;height:12px;border-radius:50%;background:#dfe9f4;border:1px solid #9db7d6"></div>
<div class="abs" style="left:122px;top:1012px;width:54px;height:6px;background:#eef3f9;border:1px solid #6d7c8c;border-radius:3px 3px 0 0"></div>
<div class="abs" style="left:307px;top:1012px;width:59px;height:6px;background:#eef3f9;border:1px solid #6d7c8c;border-radius:3px 3px 0 0"></div>
<div class="abs" style="left:369px;top:1012px;width:59px;height:6px;background:#eef3f9;border:1px solid #6d7c8c;border-radius:3px 3px 0 0"></div>
<div class="abs" style="left:617px;top:1012px;width:59px;height:6px;background:#eef3f9;border:1px solid #6d7c8c;border-radius:3px 3px 0 0"></div>
<div class="abs" style="left:678px;top:1012px;width:59px;height:6px;background:#eef3f9;border:1px solid #6d7c8c;border-radius:3px 3px 0 0"></div>
</body>
</html>
